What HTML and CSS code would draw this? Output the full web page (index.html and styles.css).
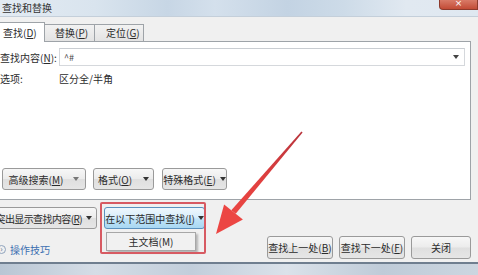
FILE: index.html
```html
<!DOCTYPE html>
<html lang="zh">
<head>
<meta charset="utf-8">
<title>查找和替换</title>
<link rel="stylesheet" href="styles.css">
</head>
<body>
<div class="window">
  <div class="titlebar">
    <span class="title">查找和替换</span>
    <span class="close">×</span>
  </div>
  <div class="dialog">
    <div class="tabs">
      <div class="tab active">查找(<u>D</u>)</div>
      <div class="tab">替换(<u>P</u>)</div>
      <div class="tab">定位(<u>G</u>)</div>
    </div>
    <div class="panel">
      <div class="row find-row">
        <span class="label">查找内容(<u>N</u>):</span>
        <div class="combo"><span class="combo-text">^#</span><span class="caret"></span></div>
      </div>
      <div class="row opt-row">
        <span class="label">选项:</span>
        <span>区分全/半角</span>
      </div>
      <div class="btn-row row1">
        <div class="btn btn-adv">高级搜索(<u>M</u>)<span class="caret dim"></span></div>
        <div class="btn btn-fmt">格式(<u>O</u>)<span class="caret"></span></div>
        <div class="btn btn-spec">特殊格式(<u>E</u>)<span class="caret"></span></div>
      </div>
    </div>
    <div class="btn-row row2">
      <div class="btn btn-hl"><span class="tight">突出显示查找内容(<u>R</u>)</span><span class="caret"></span></div>
      <div class="btn btn-in hot">在以下范围中查找(<u>I</u>)<span class="caret"></span></div>
    </div>
    <div class="footer">
      <div class="tips"><span class="tip-icon">›</span><span class="tip-link">操作技巧</span></div>
      <div class="actions">
        <div class="btn btn-act">查找上一处(<u>B</u>)</div>
        <div class="btn btn-act">查找下一处(<u>F</u>)</div>
        <div class="btn btn-close">关闭</div>
      </div>
    </div>
  </div>
  <div class="taskbar"></div>

  <div class="menu">主文档(M)</div>
  <div class="highlight"></div>
  <svg class="arrow" width="478" height="275" viewBox="0 0 478 275">
    <defs>
      <linearGradient id="ag" x1="302" y1="132" x2="216" y2="234" gradientUnits="userSpaceOnUse">
        <stop offset="0" stop-color="#b8343c"/>
        <stop offset="0.5" stop-color="#e2403f"/>
        <stop offset="1" stop-color="#ef4a45"/>
      </linearGradient>
    </defs>
    <polygon points="302.6,132.4 301.4,131.6 231.3,210.2 235.7,213.8" fill="url(#ag)"/>
    <polygon points="216,234 224.1,204.5 242.9,219.5" fill="#ec4643"/>
  </svg>
</div>
</body>
</html>
```
FILE: styles.css
```css
html, body {
  margin: 0;
  padding: 0;
  background: #f0f0f0;
}
.window {
  position: relative;
  width: 478px;
  height: 275px;
  overflow: hidden;
  font-family: "Noto Sans CJK SC", "Noto Sans", sans-serif;
  font-size: 10px;
  color: #2b2b2b;
  display: flex;
  flex-direction: column;
  white-space: nowrap;
}
u { text-decoration: underline; text-underline-offset: 1px; }

.titlebar {
  height: 17px;
  box-sizing: border-box;
  display: flex;
  align-items: flex-start;
  background: linear-gradient(90deg, #e3ebf3 0%, #d9e4ee 20%, #c7d6e5 35%, #d4e0ec 45%, #c3d3e3 60%, #cddbe8 72%, #e1e9f1 85%, #dfe8f1 100%);
  border-bottom: 1px solid #c4cfda;
}
.title {
  padding-left: 2px;
  line-height: 15px;
  color: #333;
}
.close {
  margin-left: auto;
  width: 37px;
  height: 9px;
  border-radius: 0 0 0 4px;
  background: linear-gradient(#d97a67, #c24b36);
  border: 1px solid #8d3a2c;
  border-top: none;
  color: #fff;
  font-family: "DejaVu Sans", sans-serif;
  font-size: 9px;
  line-height: 7px;
  text-align: center;
  overflow: hidden;
}

.dialog {
  flex: 1;
  display: flex;
  flex-direction: column;
  background: #f0f0f0;
  padding-right: 7px;
}

.tabs {
  height: 24px;
  box-sizing: border-box;
  padding-top: 5px;
  margin-left: -1px;
  display: flex;
  align-items: flex-end;
}
.tab {
  height: 17px;
  box-sizing: border-box;
  border: 1px solid #9ea3a8;
  border-bottom: none;
  background: linear-gradient(#f2f2f2, #e3e3e3);
  padding: 0 0 0 10px;
  line-height: 16px;
  margin-left: -1px;
}
.tab:nth-child(2) { width: 51px; }
.tab:nth-child(3) { width: 50px; padding-left: 11px; }
.tab.active {
  width: 46px;
  height: 20px;
  margin-bottom: -1px;
  margin-left: 0;
  background: #fff;
  position: relative;
  z-index: 1;
  padding: 0 0 0 3px;
  line-height: 19px;
}

.panel {
  height: 159px;
  box-sizing: border-box;
  margin-left: -1px;
  background: #fff;
  border: 1px solid #9ea3a8;
  padding-top: 6px;
  display: flex;
  flex-direction: column;
}
.row {
  display: flex;
  align-items: center;
}
.label {
  width: 59px;
  flex: none;
}
.find-row { height: 18px; }
.combo {
  width: 406px;
  height: 18px;
  box-sizing: border-box;
  border: 1px solid #d5d8dc;
  border-top-color: #c9cdd2;
  display: flex;
  align-items: center;
  padding: 0 5px 0 4px;
}
.combo-text { flex: 1; color: #444; font-size: 9px; }
.opt-row { height: 14px; margin-top: 5px; }

.btn-row {
  display: flex;
  align-items: center;
}
.row1 {
  margin-top: auto;
  margin-bottom: 9px;
  padding-left: 2px;
  gap: 7px;
}
.btn {
  height: 22px;
  box-sizing: border-box;
  border: 1px solid #9a9a9a;
  border-radius: 3px;
  background: linear-gradient(#f7f7f7 0%, #ececec 48%, #dfdfdf 52%, #e6e6e6 100%);
  display: flex;
  align-items: center;
  justify-content: center;
}
.caret {
  display: inline-block;
  width: 0;
  height: 0;
  border-left: 3px solid transparent;
  border-right: 3px solid transparent;
  border-top: 4px solid #333;
  margin-left: 5px;
}
.combo .caret { margin-left: 0; border-top-color: #444; }
.caret.dim { border-top-color: #777; margin-left: 10px; }
.btn-adv { width: 84px; }
.btn-fmt { width: 61px; }
.btn-fmt .caret { margin-left: 11px; }
.btn-spec { width: 65px; margin-left: 1px; }
.btn-spec .caret { margin-left: 4px; }

.row2 {
  margin-top: 7px;
  height: 22px;
  gap: 7px;
}
.btn-hl {
  width: 103px;
  margin-left: -6px;
  justify-content: flex-end;
  padding-right: 4px;
}
.tight { letter-spacing: -0.6px; }
.btn-hl .caret { margin-left: 4px; }
.btn-in { width: 101px; padding: 0; }
.btn-in .caret { margin-left: 3px; }
.btn.hot {
  border-color: #5b91be;
  background: linear-gradient(#eef7fd 0%, #d9eefb 45%, #bfe3f7 55%, #a9d8f3 100%);
}

.footer {
  margin-top: 7px;
  height: 23px;
  display: flex;
  align-items: center;
}
.tips {
  display: flex;
  align-items: center;
  margin-left: -3px;
  margin-top: 3px;
}
.tip-icon {
  width: 9px;
  height: 9px;
  box-sizing: border-box;
  border: 1px solid #8fa3bd;
  border-radius: 50%;
  color: #556c88;
  font-size: 8px;
  line-height: 6px;
  text-align: center;
  margin-right: 4px;
}
.tip-link { color: #3d6fb0; }
.actions {
  margin-left: auto;
  display: flex;
  gap: 6px;
}
.btn-act { width: 66px; height: 23px; }
.btn-close { width: 60px; height: 23px; }

.taskbar {
  height: 13px;
  margin-top: 3px;
  box-sizing: border-box;
  border-top: 2px solid #6f7e8f;
  background: linear-gradient(90deg, #b9c6d4, #d5dde6 20%, #c2cedb 40%, #dbe2ea 60%, #bfcbd8 80%, #ccd6e0);
}

.menu {
  position: absolute;
  left: 106px;
  top: 232px;
  width: 90px;
  height: 19px;
  box-sizing: border-box;
  background: #f1f1f1;
  border: 1px solid #a7a7a7;
  box-shadow: 2px 2px 2px rgba(0, 0, 0, 0.25);
  text-align: center;
  line-height: 17px;
}
.highlight {
  position: absolute;
  left: 100px;
  top: 202px;
  width: 106px;
  height: 52px;
  box-sizing: border-box;
  border: 2px solid #d75a62;
  border-radius: 2px;
}
.arrow {
  position: absolute;
  left: 0;
  top: 0;
  pointer-events: none;
}
```
